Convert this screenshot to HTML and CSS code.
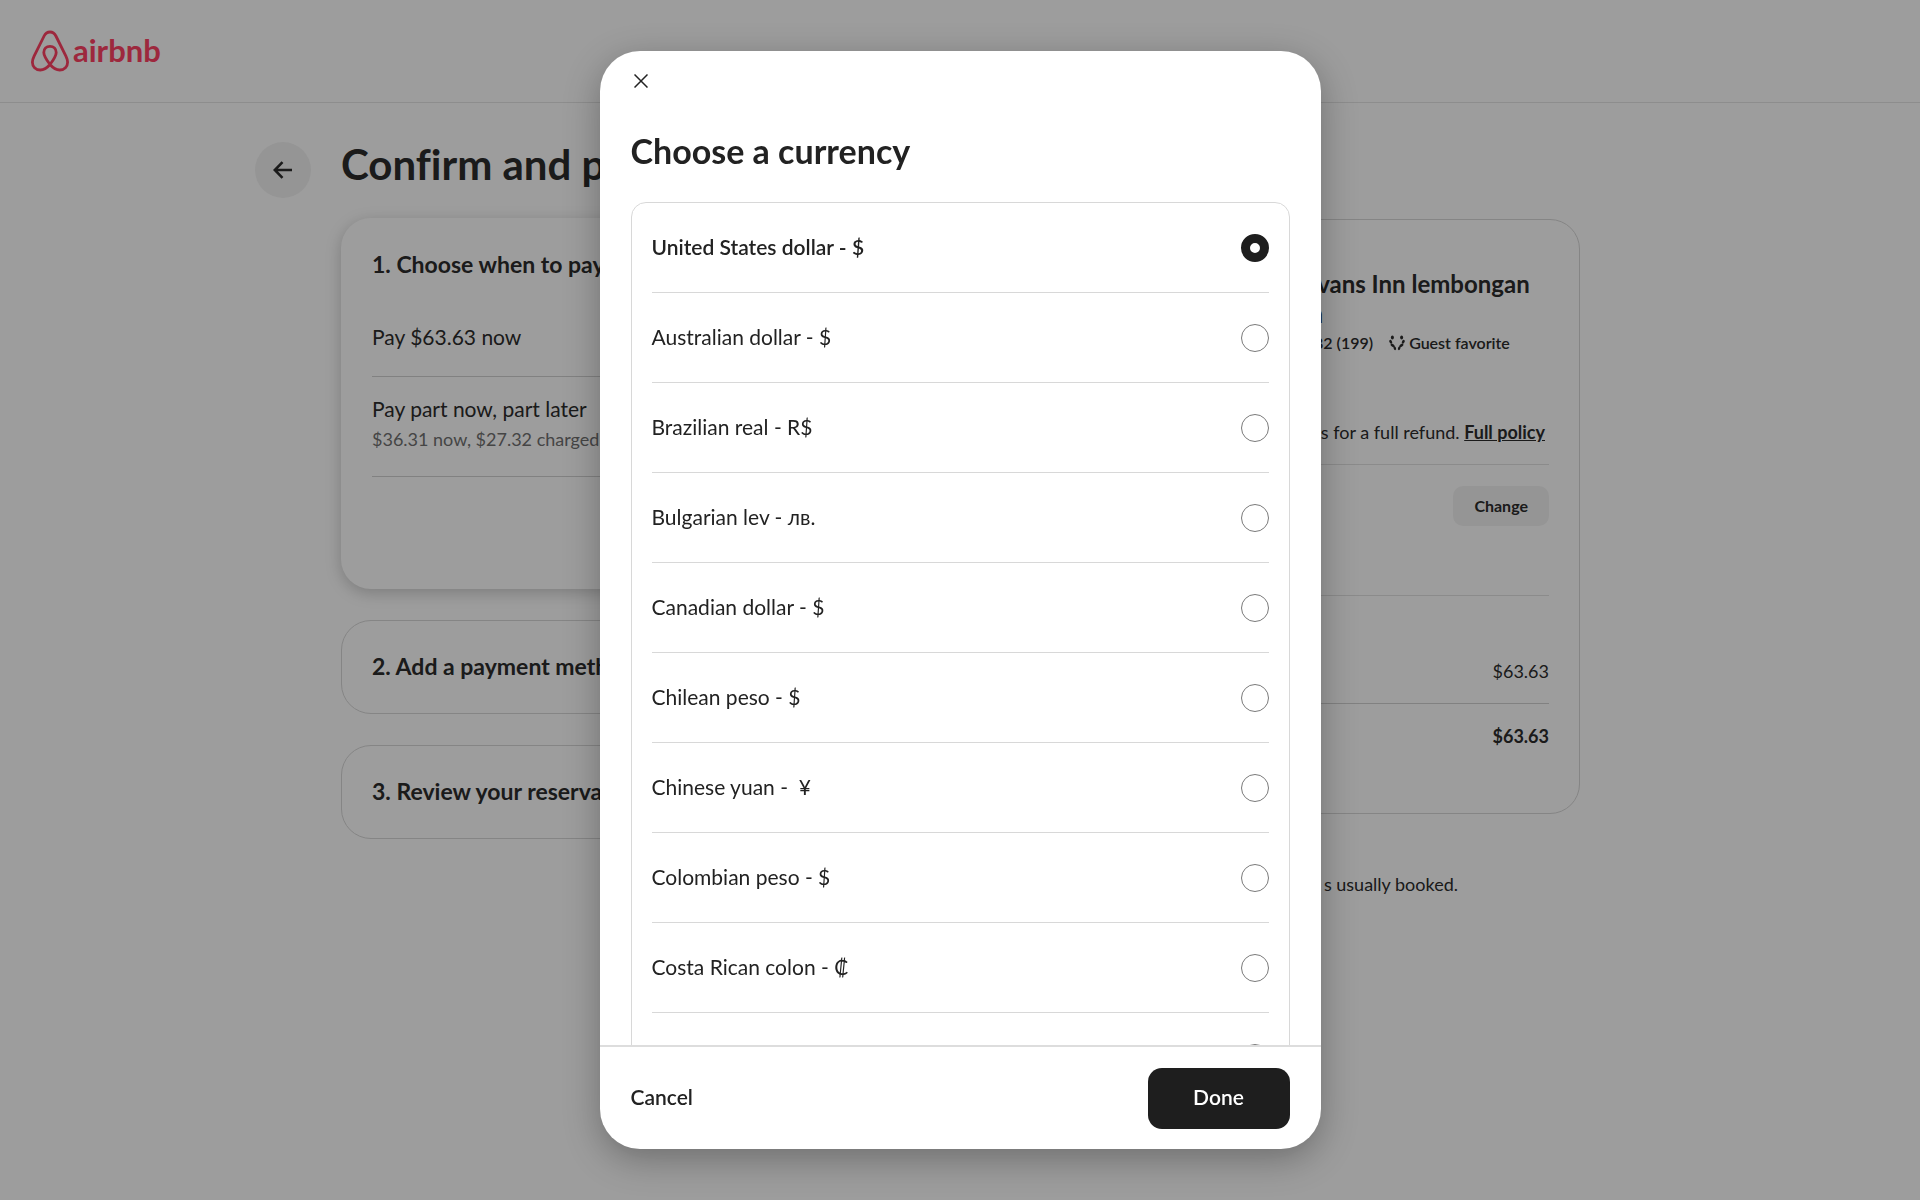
FILE: index.html
```html
<!DOCTYPE html>
<html lang="en">
<head>
    <meta charset="UTF-8">
    <meta name="viewport" content="width=device-width, initial-scale=1.0">
    <title>Confirm and pay</title>
    <link rel="stylesheet" href="styles.css">
</head>
<body>
    <header class="site-header">
        <a class="logo" href="#">
            <svg width="40" height="42" viewBox="0 0 40 42" fill="none" stroke="currentColor" stroke-width="2.800">
                <path d="M20 34.500C15.800 29 13.800 25.500 13.800 22.500C13.800 18.900 16.300 16.400 20 16.400C23.700 16.400 26.200 18.900 26.200 22.500C26.200 25.500 24.200 29 20 34.500C16.500 38.500 13.500 40 10.300 40C5.500 40 2.400 36.500 2.400 32.300C2.400 30 3 28.500 4.100 26.200L14.100 6C15.500 3.200 17.200 2 20 2C22.800 2 24.500 3.200 25.900 6L35.900 26.200C37 28.500 37.600 30 37.600 32.300C37.600 36.500 34.500 40 29.700 40C26.500 40 23.500 38.500 20 34.500Z"/>
            </svg>
            <span>airbnb</span>
        </a>
    </header>

    <main class="page">
        <div class="page-title">
            <button class="back" type="button" aria-label="Back">
                <svg width="20" height="18" viewBox="0 0 20 18" fill="none" stroke="currentColor" stroke-width="2.600">
                    <path d="M9.500 1.200L1.800 9L9.500 16.800M1.800 9H19"/>
                </svg>
            </button>
            <h1>Confirm and pay</h1>
        </div>

        <div class="columns">
            <div class="steps">
                <section class="step step-active">
                    <h2>1. Choose when to pay</h2>
                    <div class="plan plan-full">Pay $63.63 now</div>
                    <div class="plan plan-split">
                        Pay part now, part later
                        <small>$36.31 now, $27.32 charged</small>
                    </div>
                </section>
                <section class="step">
                    <h2>2. Add a payment method</h2>
                </section>
                <section class="step">
                    <h2>3. Review your reservation</h2>
                </section>
            </div>

            <aside class="side">
                <div class="summary">
                    <div class="listing">
                        <h3>Bevans Inn lembongan Inn</h3>
                        <div class="rating">
                            <span class="score">
                                <svg width="12" height="12" viewBox="0 0 12 12" fill="currentColor">
                                    <path d="M6 0L7.800 4L12 4.500L8.900 7.400L9.700 11.700L6 9.600L2.300 11.700L3.100 7.400L0 4.500L4.200 4Z"/>
                                </svg>
                                4.82 (199)
                            </span>
                            <span class="favorite">
                                <svg width="16" height="16" viewBox="0 0 16 16" fill="currentColor">
                                    <ellipse cx="3.400" cy="2.400" rx="1.500" ry="2"/>
                                    <ellipse cx="1.700" cy="6.800" rx="1.300" ry="2" transform="rotate(-25 1.700 6.800)"/>
                                    <ellipse cx="3.600" cy="10.400" rx="1.300" ry="2.300" transform="rotate(-55 3.600 10.400)"/>
                                    <ellipse cx="5.800" cy="13.200" rx="1.200" ry="2" transform="rotate(-20 5.800 13.200)"/>
                                    <ellipse cx="12.600" cy="2.400" rx="1.500" ry="2"/>
                                    <ellipse cx="14.300" cy="6.800" rx="1.300" ry="2" transform="rotate(25 14.300 6.800)"/>
                                    <ellipse cx="12.400" cy="10.400" rx="1.300" ry="2.300" transform="rotate(55 12.400 10.400)"/>
                                    <ellipse cx="10.200" cy="13.200" rx="1.200" ry="2" transform="rotate(20 10.200 13.200)"/>
                                </svg>
                                Guest favorite
                            </span>
                        </div>
                    </div>
                    <p class="refund">days for a full refund. <a href="#">Full policy</a></p>
                    <div class="dates">
                        <button class="change" type="button">Change</button>
                    </div>
                    <div class="price">$63.63</div>
                    <div class="price total">$63.63</div>
                </div>
                <p class="rare">s usually booked.</p>
            </aside>
        </div>
    </main>

    <div class="overlay">
        <form class="modal" role="dialog" aria-labelledby="modal-title">
            <div class="modal-top">
                <button class="close" type="button" aria-label="Close">
                    <svg width="14" height="14" viewBox="0 0 14 14" fill="none" stroke="currentColor" stroke-width="1.500">
                        <path d="M.5 .5L13.500 13.500M13.500 .5L.5 13.500"/>
                    </svg>
                </button>
            </div>
            <div class="modal-body">
                <h2 id="modal-title">Choose a currency</h2>
                <div class="currencies">
                    <label class="currency"><span>United States dollar - $</span><input type="radio" name="currency" checked></label>
                    <label class="currency"><span>Australian dollar - $</span><input type="radio" name="currency"></label>
                    <label class="currency"><span>Brazilian real - R$</span><input type="radio" name="currency"></label>
                    <label class="currency"><span>Bulgarian lev - лв.</span><input type="radio" name="currency"></label>
                    <label class="currency"><span>Canadian dollar - $</span><input type="radio" name="currency"></label>
                    <label class="currency"><span>Chilean peso - $</span><input type="radio" name="currency"></label>
                    <label class="currency"><span>Chinese yuan - &nbsp;¥</span><input type="radio" name="currency"></label>
                    <label class="currency"><span>Colombian peso - $</span><input type="radio" name="currency"></label>
                    <label class="currency"><span>Costa Rican colon - ₡</span><input type="radio" name="currency"></label>
                    <label class="currency"><span></span><input type="radio" name="currency"></label>
                </div>
            </div>
            <div class="modal-footer">
                <button class="cancel" type="button">Cancel</button>
                <button class="done" type="submit">Done</button>
            </div>
        </form>
    </div>
</body>
</html>
```

FILE: styles.css
```css
* {
    box-sizing: border-box;
}

body {
    margin: 0;
    height: 100vh;
    overflow: hidden;
    font-family: Lato, "Noto Sans", sans-serif;
    font-size: 18px;
    font-variant-ligatures: none;
    line-height: 24px;
    color: #222;
    background: #fff;
}

h1, h2, h3, p {
    margin: 0;
    font-weight: 700;
}

button {
    font-family: inherit;
    color: inherit;
    border: none;
    padding: 0;
    background: none;
    cursor: pointer;
}

svg {
    display: block;
}

.site-header {
    display: flex;
    align-items: center;
    height: 103px;
    padding: 0 30px;
    border-bottom: 1px solid #e4e4e4;
}

.logo {
    display: flex;
    align-items: center;
    gap: 3px;
    color: #ff385c;
    font-size: 31px;
    font-weight: 700;
    text-decoration: none;
}

.logo span {
    padding-bottom: 3px;
}

/* Page behind the modal */

.page {
    max-width: 1240px;
    margin: 0 auto;
    padding-left: 1px;
}

.page-title {
    display: flex;
    align-items: flex-start;
    gap: 30px;
    height: 115px;
    padding-top: 39px;
    margin-left: -86px;
}

.page-title h1 {
    font-size: 42px;
    line-height: 44px;
}

.back {
    display: flex;
    align-items: center;
    justify-content: center;
    width: 56px;
    height: 56px;
    border-radius: 50%;
    background: #f2f2f2;
}

.columns {
    display: flex;
    justify-content: space-between;
    align-items: flex-start;
}

.steps {
    width: 640px;
}

.step {
    padding: 29px 30px 31px;
    margin-bottom: 31px;
    border: 1px solid #d6d6d6;
    border-radius: 30px;
}

.step h2 {
    font-size: 23px;
    line-height: 32px;
}

.step-active {
    height: 371px;
    border-color: transparent;
    box-shadow: 0 4px 16px rgba(0, 0, 0, 0.22);
}

.plan {
    font-size: 21px;
    line-height: 28px;
    border-bottom: 1px solid #d0d0d0;
}

.plan-full {
    padding: 43px 0 25px;
}

.plan-split {
    padding: 18px 0 23px;
}

.plan small {
    display: block;
    margin-top: 2px;
    font-size: 18px;
    color: #6a6a6a;
}

.side {
    width: 512px;
}

.summary {
    height: 595px;
    margin-top: 1px;
    padding: 49px 30px 0;
    border: 1px solid #d6d6d6;
    border-radius: 30px;
}

.listing {
    padding-left: 190px;
}

.listing h3 {
    font-size: 24px;
    line-height: 30px;
}

.rating {
    display: flex;
    gap: 16px;
    margin-top: 2px;
    font-size: 16px;
    font-weight: 600;
}

.score {
    display: flex;
    align-items: center;
}

.favorite {
    display: flex;
    align-items: center;
    gap: 4px;
}

.refund {
    padding: 65px 4px 20px;
    text-align: right;
    font-weight: 400;
    border-bottom: 1px solid #e0e0e0;
}

.refund a {
    color: inherit;
    font-weight: 700;
}

.dates {
    height: 131px;
    padding-top: 21px;
    text-align: right;
    border-bottom: 1px solid #e0e0e0;
}

.change {
    height: 40px;
    padding: 0 21px 2px;
    border-radius: 10px;
    background: #f2f2f2;
    font-size: 16px;
    font-weight: 700;
}

.price {
    padding: 63px 0 20px;
    text-align: right;
    border-bottom: 1px solid #d0d0d0;
}

.total {
    padding: 20px 0 0;
    border: none;
    font-weight: 700;
}

.rare {
    padding: 58px 122px 0 0;
    text-align: right;
    font-weight: 400;
}

/* Modal */

.overlay {
    position: fixed;
    inset: 0;
    display: flex;
    justify-content: center;
    padding: 51px 0;
    background: rgba(16, 16, 16, 0.41);
}

.modal {
    display: flex;
    flex-direction: column;
    width: 721px;
    overflow: hidden;
    border-radius: 40px;
    background: #fff;
    box-shadow: 0 10px 36px rgba(0, 0, 0, 0.3);
}

.modal-top {
    padding: 23px 34px;
}

.close {
    display: block;
}

.modal-body {
    flex: 1;
    min-height: 0;
    overflow-y: auto;
    scrollbar-width: none;
    padding: 18px 31px 0;
}

.modal-body h2 {
    font-size: 34px;
    line-height: 44px;
}

.currencies {
    margin-top: 29px;
    padding: 0 20px;
    border: 1px solid #d8d8d8;
    border-radius: 15px;
}

.currency {
    display: flex;
    align-items: center;
    justify-content: space-between;
    height: 90px;
    border-bottom: 1px solid #d8d8d8;
    font-size: 21px;
    line-height: 28px;
    cursor: pointer;
}

.currency span {
    padding-bottom: 2px;
}

.currency:has(input:checked) {
    font-weight: 600;
}

.currency:last-child {
    border-bottom: none;
}

.currency input {
    appearance: none;
    width: 28px;
    height: 28px;
    margin: 0;
    border: 1px solid #7a7a7a;
    border-radius: 50%;
    background: #fff;
}

.currency input:checked {
    border: 9px solid #1e1e1e;
}

.modal-footer {
    display: flex;
    align-items: center;
    justify-content: space-between;
    height: 104px;
    padding: 0 31px;
    border-top: 2px solid #ddd;
}

.cancel, .done {
    padding-bottom: 3px;
    font-size: 21px;
    font-weight: 600;
}

.done {
    width: 142px;
    height: 61px;
    border-radius: 14px;
    color: #fff;
    background: #1e1e1e;
}
```
